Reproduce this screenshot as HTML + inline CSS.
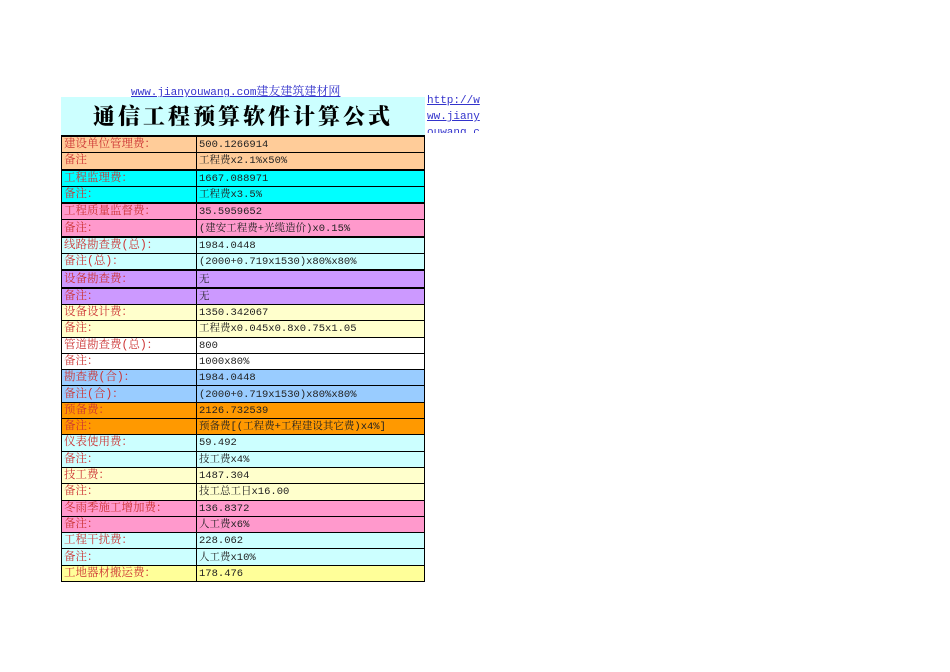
<!DOCTYPE html>
<html><head><meta charset="utf-8"><style>
body{margin:0;background:#fff;width:950px;height:672px;position:relative;overflow:hidden;font-family:"Liberation Mono","Noto Serif CJK SC",serif;}
.lnk{position:absolute;left:131px;top:82px;font-size:11px;color:#3333cc;text-decoration:underline;white-space:nowrap;}
.lnk span{font-size:12px}
.r{position:absolute;left:427px;font-size:11px;color:#3333cc;text-decoration:underline;white-space:nowrap;width:53px;overflow:hidden;}
.title{position:absolute;left:61px;top:97px;width:364px;height:38px;background:#ccffff;font-family:"Noto Serif CJK SC",serif;font-weight:900;font-size:22px;letter-spacing:3px;text-align:center;line-height:38px;color:#000;}
table{position:absolute;left:61px;top:135px;border-collapse:collapse;width:364px;table-layout:fixed;}
td{border:1px solid #000;height:14.3px;padding:1px 0 0 2px;font-size:10.5px;line-height:14px;white-space:nowrap;overflow:hidden;vertical-align:middle;}
td.a{width:132px;color:#cc3333;font-size:11.5px;}
td.b{color:#222;}
tr.g td{border-top:2px solid #000;}
</style></head><body>
<div class="lnk">www.jianyouwang.com<span>建友建筑建材网</span></div>
<div class="r" style="top:95px">http://w</div>
<div class="r" style="top:111px">ww.jiany</div>
<div class="r" style="top:127px;height:6px">ouwang.c</div>
<div class="title">通信工程预算软件计算公式</div>
<table>
<tr class="g" style="background:#ffcc99"><td class="a">建设单位管理费：</td><td class="b">500.1266914</td></tr>
<tr style="background:#ffcc99"><td class="a">备注</td><td class="b">工程费x2.1%x50%</td></tr>
<tr class="g" style="background:#00ffff"><td class="a">工程监理费：</td><td class="b">1667.088971</td></tr>
<tr style="background:#00ffff"><td class="a">备注：</td><td class="b">工程费x3.5%</td></tr>
<tr class="g" style="background:#ff99cc"><td class="a">工程质量监督费：</td><td class="b">35.5959652</td></tr>
<tr style="background:#ff99cc"><td class="a">备注：</td><td class="b">(建安工程费+光缆造价)x0.15%</td></tr>
<tr class="g" style="background:#ccffff"><td class="a">线路勘查费(总)：</td><td class="b">1984.0448</td></tr>
<tr style="background:#ccffff"><td class="a">备注(总)：</td><td class="b">(2000+0.719x1530)x80%x80%</td></tr>
<tr class="g" style="background:#cc99ff"><td class="a">设备勘查费：</td><td class="b">无</td></tr>
<tr class="g" style="background:#cc99ff"><td class="a">备注：</td><td class="b">无</td></tr>
<tr style="background:#ffffcc"><td class="a">设备设计费：</td><td class="b">1350.342067</td></tr>
<tr style="background:#ffffcc"><td class="a">备注：</td><td class="b">工程费x0.045x0.8x0.75x1.05</td></tr>
<tr style="background:#ffffff"><td class="a">管道勘查费(总)：</td><td class="b">800</td></tr>
<tr style="background:#ffffff"><td class="a">备注：</td><td class="b">1000x80%</td></tr>
<tr style="background:#99ccff"><td class="a">勘查费(合)：</td><td class="b">1984.0448</td></tr>
<tr style="background:#99ccff"><td class="a">备注(合)：</td><td class="b">(2000+0.719x1530)x80%x80%</td></tr>
<tr style="background:#ff9900"><td class="a">预备费：</td><td class="b">2126.732539</td></tr>
<tr style="background:#ff9900"><td class="a">备注：</td><td class="b">预备费[(工程费+工程建设其它费)x4%]</td></tr>
<tr style="background:#ccffff"><td class="a">仪表使用费：</td><td class="b">59.492</td></tr>
<tr style="background:#ccffff"><td class="a">备注：</td><td class="b">技工费x4%</td></tr>
<tr style="background:#ffffcc"><td class="a">技工费：</td><td class="b">1487.304</td></tr>
<tr style="background:#ffffcc"><td class="a">备注：</td><td class="b">技工总工日x16.00</td></tr>
<tr style="background:#ff99cc"><td class="a">冬雨季施工增加费：</td><td class="b">136.8372</td></tr>
<tr style="background:#ff99cc"><td class="a">备注：</td><td class="b">人工费x6%</td></tr>
<tr style="background:#ccffff"><td class="a">工程干扰费：</td><td class="b">228.062</td></tr>
<tr style="background:#ccffff"><td class="a">备注：</td><td class="b">人工费x10%</td></tr>
<tr style="background:#ffff99"><td class="a">工地器材搬运费：</td><td class="b">178.476</td></tr>
</table>
</body></html>
